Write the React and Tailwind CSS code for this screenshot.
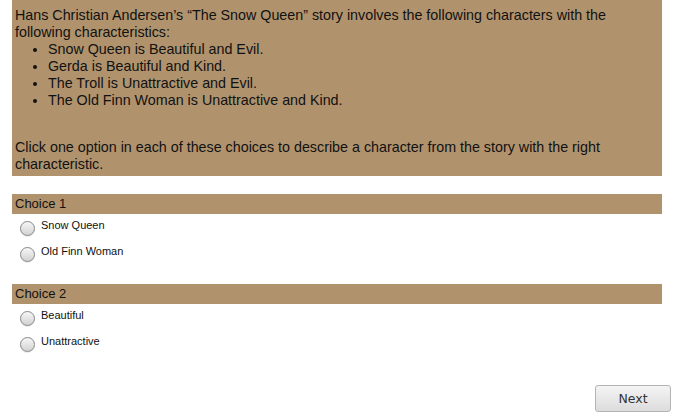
export default function App() {
  const Radio = ({ label }) => (
    <label className="flex items-start h-[26px]">
      <span className="mt-[7px] ml-[20px] w-[15px] h-[15px] rounded-full border border-[#868686] bg-gradient-to-b from-[#f7f7f7] to-[#d2d2d2] shadow-[0_1px_0_rgba(0,0,0,0.08)]" />
      <span className="ml-[6px] mt-[5px] text-[11px] leading-[13px] text-[#111]">{label}</span>
    </label>
  );
  return (
    <div className="w-[679px] h-[418px] bg-white relative" style={{ fontFamily: '"Liberation Sans", Arial, sans-serif' }}>
      <div className="ml-[12px] w-[650px] bg-[#b0936d] pl-[3px] pr-[3px] pt-[7px] pb-[3px] text-[14.3px] leading-[17px] text-[#111]">
        <div>Hans Christian Andersen’s “The Snow Queen” story involves the following characters with the following characteristics:</div>
        <ul className="pl-[33px] list-disc">
          <li>Snow Queen is Beautiful and Evil.</li>
          <li>Gerda is Beautiful and Kind.</li>
          <li>The Troll is Unattractive and Evil.</li>
          <li>The Old Finn Woman is Unattractive and Kind.</li>
        </ul>
        <div className="mt-[30px]">Click one option in each of these choices to describe a character from the story with the right characteristic.</div>
      </div>
      <div className="mt-[18px] ml-[12px] w-[650px] h-[20px] bg-[#b0936d] pl-[3px] text-[13px] leading-[20px] text-[#111]">Choice 1</div>
      <Radio label="Snow Queen" />
      <Radio label="Old Finn Woman" />
      <div className="mt-[18px] ml-[12px] w-[650px] h-[20px] bg-[#b0936d] pl-[3px] text-[13px] leading-[20px] text-[#111]">Choice 2</div>
      <Radio label="Beautiful" />
      <Radio label="Unattractive" />
      <div className="flex justify-end pr-[8px] mt-[29px]">
        <button className="w-[76px] h-[27px] rounded-[3px] border border-[#b4b4b4] bg-gradient-to-b from-[#f4f4f4] to-[#dcdcdc] text-[#333] leading-[25px]" style={{ fontFamily: '"DejaVu Sans", sans-serif', fontSize: '12.5px' }}>Next</button>
      </div>
    </div>
  );
}
